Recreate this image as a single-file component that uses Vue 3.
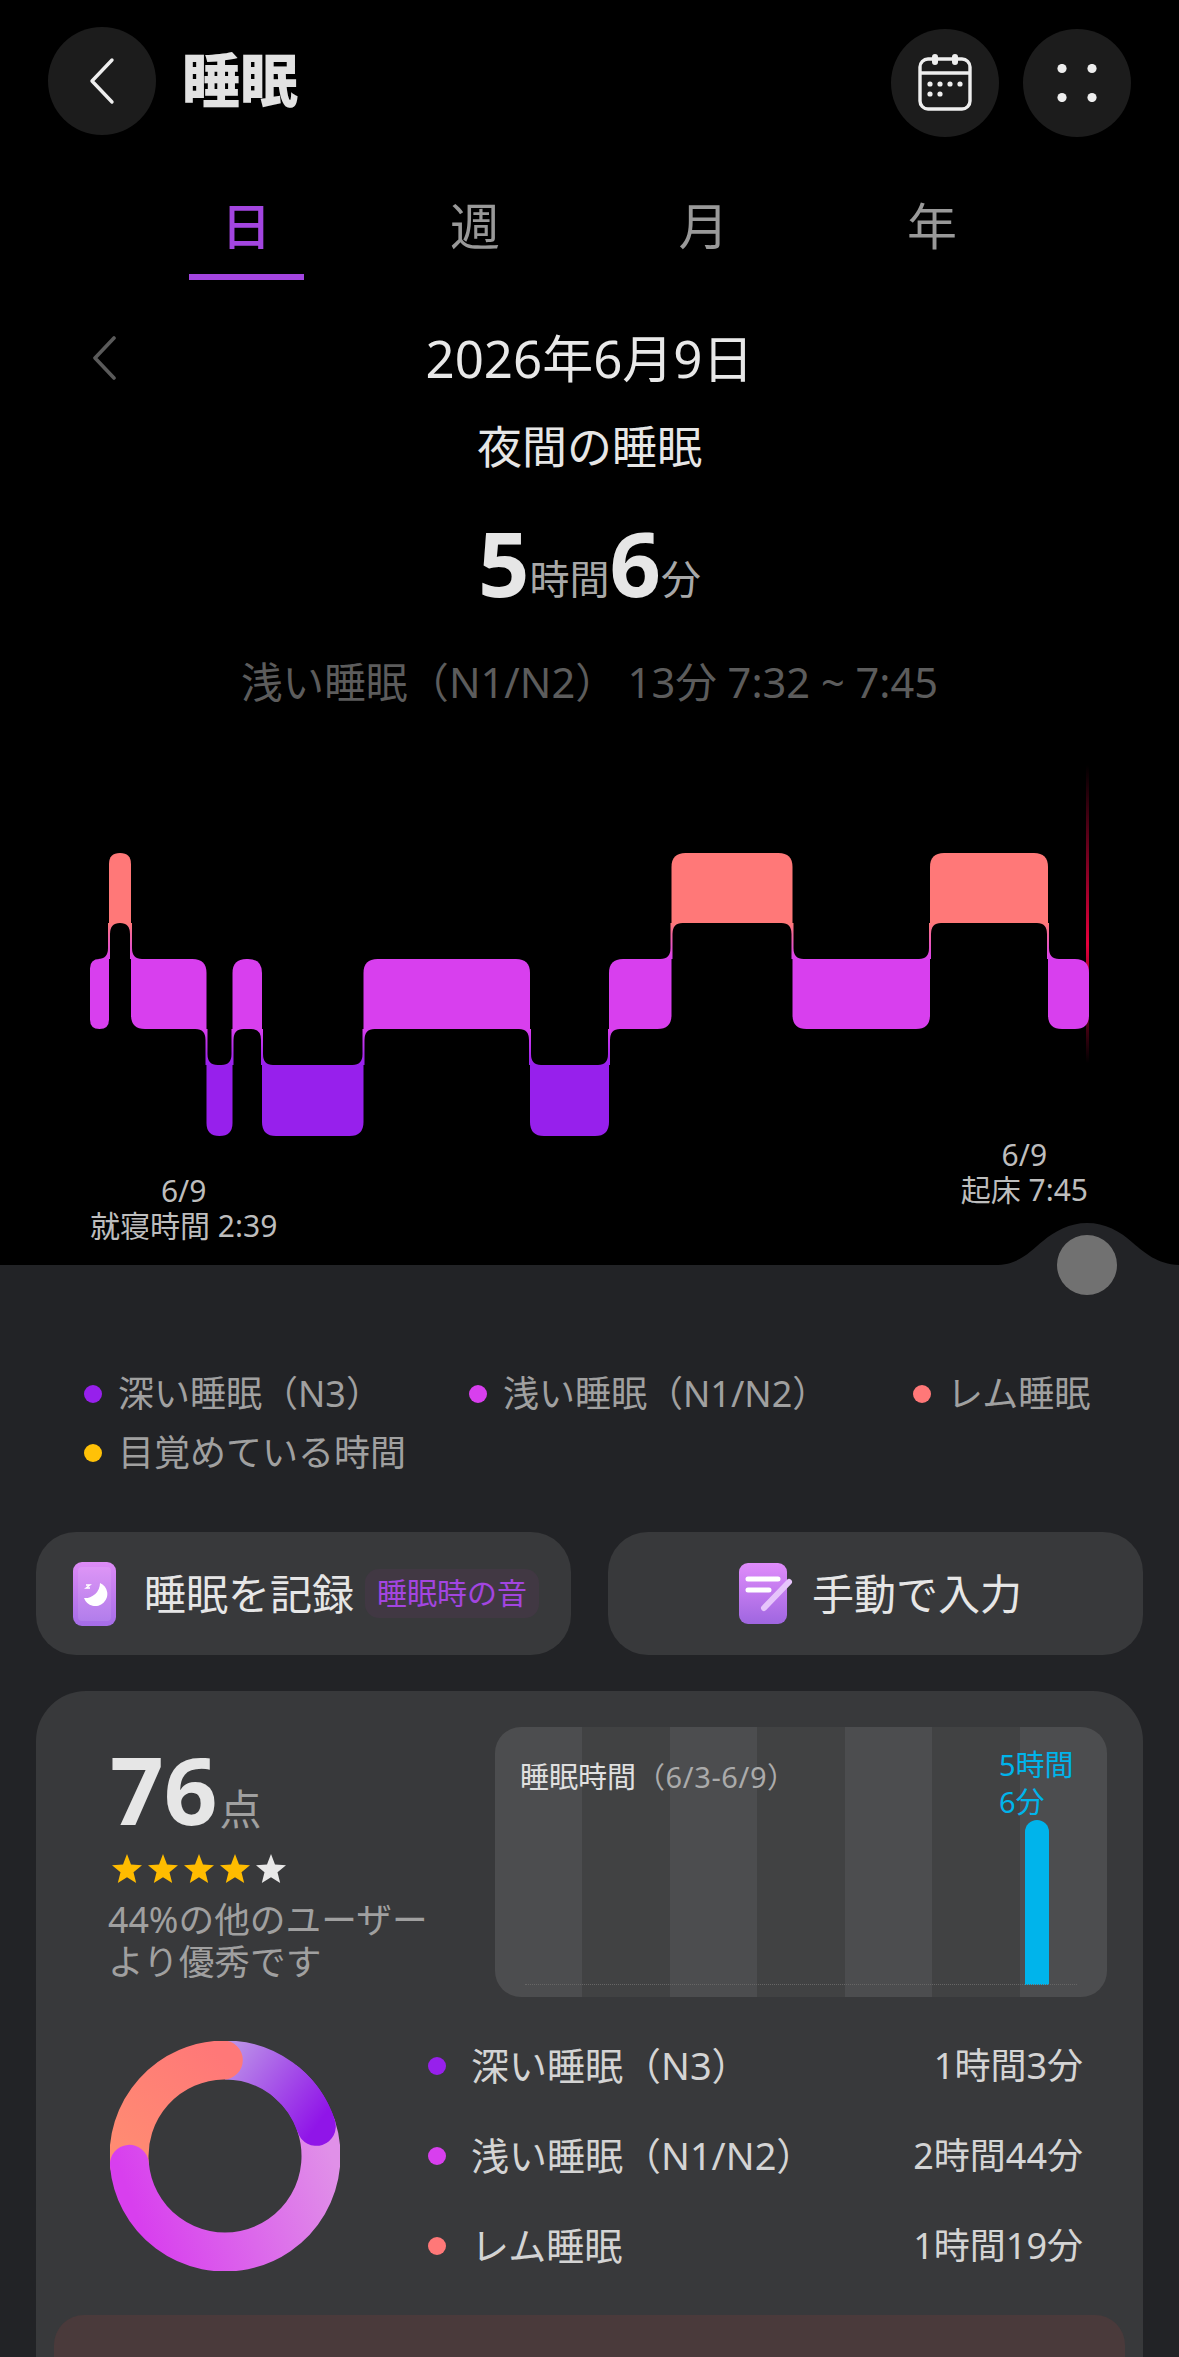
<template>
  <div class="page">
    <header class="top">
      <button class="round">
        <svg width="30" height="48" viewBox="0 0 30 48"><path d="M25 3 5 24l20 21" fill="none" stroke="#eee" stroke-width="3.4" stroke-linecap="round" stroke-linejoin="round" /></svg>
      </button>
      <h1>睡眠</h1>
      <div class="top-right">
        <button class="round">
          <svg width="56" height="58" viewBox="0 0 56 58">
            <rect x="3" y="5" width="50" height="50" rx="8" fill="none" stroke="#eee" stroke-width="3.4" />
            <path d="M3 19h50" stroke="#eee" stroke-width="3.4" />
            <path d="M18 3v5M38 3v5" stroke="#eee" stroke-width="6" stroke-linecap="round" />
            <circle v-for="d in calDots" :key="d[0] + '-' + d[1]" :cx="d[0]" :cy="d[1]" r="2.6" fill="#eee" />
          </svg>
        </button>
        <button class="round">
          <svg width="44" height="38" viewBox="0 0 44 38">
            <circle cx="7" cy="4.500" r="4.600" fill="#eee" />
            <circle cx="37" cy="4.500" r="4.600" fill="#eee" />
            <circle cx="7" cy="33.500" r="4.600" fill="#eee" />
            <circle cx="37" cy="33.500" r="4.600" fill="#eee" />
          </svg>
        </button>
      </div>
    </header>

    <nav class="tabs">
      <div v-for="(t, i) in tabs" :key="t" class="tab" :class="{ on: i === 0 }">
        <span>{{ t }}</span>
        <i></i>
      </div>
    </nav>

    <div class="date-row">
      <svg width="26" height="44" viewBox="0 0 26 44"><path d="M23 2 4 22l19 20" fill="none" stroke="#5a5a5a" stroke-width="3.6" stroke-linecap="round" stroke-linejoin="round" /></svg>
      <div class="date">2026年6月9日</div>
      <span></span>
    </div>
    <div class="kind">夜間の睡眠</div>
    <div class="dur"><b>5</b>時間<b>6</b>分</div>
    <div class="stage">浅い睡眠（N1/N2） 13分 7:32 ~ 7:45</div>

    <svg class="hypno" width="1179" height="377" viewBox="0 760 1179 377">
      <defs>
        <linearGradient id="g-rem" gradientUnits="userSpaceOnUse" x1="0" y1="923" x2="0" y2="959">
          <stop offset="0" stop-color="#ff7878" />
          <stop offset="1" stop-color="#d83fee" />
        </linearGradient>
        <linearGradient id="g-deep" gradientUnits="userSpaceOnUse" x1="0" y1="1029" x2="0" y2="1065">
          <stop offset="0" stop-color="#d83fee" />
          <stop offset="1" stop-color="#9720ec" />
        </linearGradient>
        <linearGradient id="g-now" x1="0" y1="0" x2="0" y2="1">
          <stop offset="0" stop-color="#e6003c" stop-opacity="0" />
          <stop offset="0.6" stop-color="#e6003c" />
          <stop offset="1" stop-color="#e6003c" stop-opacity="0" />
        </linearGradient>
      </defs>
      <rect x="1086" y="765" width="3" height="298" fill="url(#g-now)" />
      <path v-for="(l, i) in links" :key="'l' + i" :d="l.d" :fill="l.fill" />
      <path v-for="(b, i) in blocks" :key="'b' + i" :d="b.d" :fill="b.fill" />
    </svg>

    <div class="marks">
      <div class="mark left">6/9<br />就寝時間 2:39</div>
      <div class="mark">6/9<br />起床 7:45</div>
    </div>

    <section class="panel">
      <div class="knob">
        <svg width="184" height="42" viewBox="0 0 184 42"><path d="M0 42C25 42 35 28 48 18 60 8 75 0 92 0c18 0 33 8 46 20 12 10 24 21 46 22Z" fill="#222326" /></svg>
        <i></i>
      </div>

      <div class="legend">
        <div v-for="l in legend" :key="l.name" class="leg" :style="{ width: l.w }">
          <i :style="{ background: l.color }"></i>{{ l.name }}
        </div>
      </div>

      <div class="actions">
        <div class="act">
          <svg width="44" height="64" viewBox="0 0 44 64">
            <defs>
              <linearGradient id="g-phone" x1="0" y1="0" x2="0" y2="1">
                <stop offset="0" stop-color="#dd8bf6" />
                <stop offset="1" stop-color="#a56de8" />
              </linearGradient>
            </defs>
            <rect width="43" height="64" rx="9" fill="url(#g-phone)" />
            <rect x="5" y="5" width="33" height="54" rx="4" fill="#fff" fill-opacity="0.1" />
            <path d="M27 21a12 12 0 1 1-16 15 15 15 0 0 0 16-15Z" fill="#fff" />
            <path d="M13 23h4l-4 3h4" fill="none" stroke="#fff" stroke-width="1.3" />
          </svg>
          <span class="act-label">睡眠を記録</span>
          <span class="pill">睡眠時の音</span>
        </div>
        <div class="act center">
          <svg width="54" height="62" viewBox="0 0 54 62">
            <defs>
              <linearGradient id="g-note" x1="0" y1="0" x2="0" y2="1">
                <stop offset="0" stop-color="#e08cfb" />
                <stop offset="1" stop-color="#9f66e0" />
              </linearGradient>
            </defs>
            <rect width="48" height="61" rx="9" fill="url(#g-note)" />
            <path d="M9 16h30M9 27h21" stroke="#fff" stroke-width="5" stroke-linecap="round" />
            <path d="M50 19 25 45" stroke="#e6c4fb" stroke-width="6" stroke-linecap="round" />
          </svg>
          <span class="act-label">手動で入力</span>
        </div>
      </div>

      <div class="card">
        <div class="summary">
          <div class="score">
            <div class="points"><b>76</b>点</div>
            <div class="stars">
              <svg v-for="n in 5" :key="n" width="30" height="30" viewBox="0 0 30 30">
                <path d="M15 1l4 10.500 11 .8-8.500 7 2.700 10.700L15 24.200 5.800 30l2.700-10.700L0 12.300l11-.8Z" :fill="n < 5 ? '#ffbc00' : '#e8e8e8'" />
              </svg>
            </div>
            <p>44%の他のユーザー<br />より優秀です</p>
          </div>
          <div class="week">
            <i v-for="n in 7" :key="n" :class="{ odd: n % 2 === 1 }"></i>
            <div class="week-title">睡眠時間<span>（6/3-6/9）</span></div>
            <div class="week-val">5時間<br />6分</div>
            <div class="week-bar"></div>
            <div class="week-base"></div>
          </div>
        </div>

        <div class="breakdown">
          <svg class="donut" width="230" height="230" viewBox="-115 -115 230 230">
            <defs>
              <linearGradient id="d-deep" gradientUnits="userSpaceOnUse" x1="0" y1="-96" x2="91" y2="-29">
                <stop offset="0" stop-color="#bb90e8" />
                <stop offset="1" stop-color="#9015e8" />
              </linearGradient>
              <linearGradient id="d-light" gradientUnits="userSpaceOnUse" x1="96" y1="-30" x2="-96" y2="40">
                <stop offset="0" stop-color="#e090e8" />
                <stop offset="1" stop-color="#d83fee" />
              </linearGradient>
              <linearGradient id="d-rem" gradientUnits="userSpaceOnUse" x1="0" y1="-96" x2="-96" y2="10">
                <stop offset="0" stop-color="#ff7878" />
                <stop offset="1" stop-color="#ff8c72" />
              </linearGradient>
            </defs>
            <path :d="arc(0, 72)" stroke="url(#d-deep)" class="ring" />
            <path :d="arc(265, 359)" stroke="url(#d-rem)" class="ring" stroke-linecap="round" />
            <path :d="arc(72, 265)" stroke="url(#d-light)" class="ring" stroke-linecap="round" />
            <path :d="arc(40, 72)" stroke="url(#d-deep)" class="ring" stroke-linecap="round" />
          </svg>
          <div class="rows">
            <div v-for="r in rows" :key="r.name" class="row">
              <i :style="{ background: r.color }"></i>
              <span>{{ r.name }}</span>
              <em>{{ r.value }}</em>
            </div>
          </div>
        </div>

        <div class="advice"></div>
      </div>
    </section>
  </div>
</template>

<script setup>
const tabs = ['日', '週', '月', '年']

const calDots = [[13, 30], [23, 30], [33, 30], [43, 30], [13, 40], [23, 40]]

const legend = [
  { name: '深い睡眠（N3）', color: '#9720ec', w: '385px' },
  { name: '浅い睡眠（N1/N2）', color: '#d83fee', w: '444px' },
  { name: 'レム睡眠', color: '#ff7878', w: 'auto' },
  { name: '目覚めている時間', color: '#ffc107', w: '100%' },
]

const rows = [
  { name: '深い睡眠（N3）', value: '1時間3分', color: '#9720ec' },
  { name: '浅い睡眠（N1/N2）', value: '2時間44分', color: '#d83fee' },
  { name: 'レム睡眠', value: '1時間19分', color: '#ff7878' },
]

const levels = {
  rem: { top: 853, bottom: 923, fill: '#ff7878', rank: 0 },
  light: { top: 959, bottom: 1029, fill: '#d83fee', rank: 1 },
  deep: { top: 1065, bottom: 1136, fill: '#9720ec', rank: 2 },
}

const segments = [
  ['light', 90, 109],
  ['rem', 109, 131],
  ['light', 131, 206.500],
  ['deep', 206.500, 232.500],
  ['light', 232.500, 262],
  ['deep', 262, 363.500],
  ['light', 363.500, 530],
  ['deep', 530, 609],
  ['light', 609, 671.500],
  ['rem', 671.500, 792.500],
  ['light', 792.500, 930],
  ['rem', 930, 1048],
  ['light', 1048, 1089],
]

const blocks = segments.map(([lv, x1, x2], i) => {
  const { top, bottom, fill, rank } = levels[lv]
  const r = Math.min(14, (x2 - x1) / 2)
  const prev = segments[i - 1] ? levels[segments[i - 1][0]].rank : null
  const next = segments[i + 1] ? levels[segments[i + 1][0]].rank : null
  // the corner that carries a link to the neighbour stays square
  const tl = prev !== null && prev < rank ? 0 : r
  const bl = prev !== null && prev > rank ? 0 : r
  const tr = next !== null && next < rank ? 0 : r
  const br = next !== null && next > rank ? 0 : r
  const d = `M${x1 + tl} ${top}H${x2 - tr}Q${x2} ${top} ${x2} ${top + tr}V${bottom - br}Q${x2} ${bottom} ${x2 - br} ${bottom}H${x1 + bl}Q${x1} ${bottom} ${x1} ${bottom - bl}V${top + tl}Q${x1} ${top} ${x1 + tl} ${top}Z`
  return { d, fill }
})

const links = segments.slice(1).map(([lv, x], i) => {
  const a = levels[segments[i][0]]
  const b = levels[lv]
  const upperLeft = a.rank < b.rank
  const u = upperLeft ? a : b
  const l = upperLeft ? b : a
  const y1 = u.bottom
  const y2 = l.top
  const s = upperLeft ? 1 : -1
  const r = 11
  const d = `M${x - s * r} ${y1}H${x + s}V${y2 - r}Q${x + s} ${y2} ${x + s * r} ${y2}H${x - s}V${y1 + r}Q${x - s} ${y1} ${x - s * r} ${y1}Z`
  return { d, fill: u.rank === 0 ? 'url(#g-rem)' : 'url(#g-deep)' }
})

const arc = (from, to) => {
  const pt = (deg) => {
    const a = (deg * Math.PI) / 180
    return `${(96 * Math.sin(a)).toFixed(2)} ${(-96 * Math.cos(a)).toFixed(2)}`
  }
  const large = to - from > 180 ? 1 : 0
  return `M${pt(from)}A96 96 0 ${large} 1 ${pt(to)}`
}
</script>

<style>
body {
  background: #000;
}
</style>

<style scoped>
.page {
  width: 1179px;
  height: 2357px;
  overflow: hidden;
  background: #000;
  color: #e6e6e6;
  font-family: "Noto Sans", "Noto Sans CJK JP", sans-serif;
}
.top {
  display: flex;
  align-items: flex-start;
  padding: 27px 48px 0;
  height: 135px;
  box-sizing: border-box;
}
.round {
  width: 108px;
  height: 108px;
  border: 0;
  border-radius: 50%;
  background: #1c1c1c;
  display: flex;
  align-items: center;
  justify-content: center;
  padding: 0;
}
h1 {
  margin: 0 0 0 26px;
  font-size: 58px;
  line-height: 106px;
  font-weight: 900;
  color: #e2e2e2;
}
.top-right {
  margin-left: auto;
  margin-top: 2px;
  display: flex;
  gap: 24px;
}
.tabs {
  display: flex;
  padding: 63px 0 0 132px;
}
.tab {
  width: 228.600px;
  display: flex;
  flex-direction: column;
  align-items: center;
  font-size: 50px;
  line-height: 60px;
  color: #999;
}
.tab span {
  margin-top: -2px;
  margin-bottom: 2px;
}
.tab i {
  width: 115px;
  height: 6px;
  margin-top: 16px;
}
.tab.on {
  color: #a345e0;
  font-weight: 500;
}
.tab.on i {
  background: #a345e0;
}
.date-row {
  display: grid;
  grid-template-columns: 1fr auto 1fr;
  align-items: center;
  margin-top: 48px;
  padding-left: 91px;
  padding-right: 91px;
  height: 60px;
}
.date {
  font-size: 51px;
  line-height: 58px;
  color: #e8e8e8;
}
.kind {
  margin-top: 29px;
  text-align: center;
  font-size: 45px;
  line-height: 60px;
  color: #e6e6e6;
}
.dur {
  margin-top: 35px;
  height: 100px;
  line-height: 100px;
  text-align: center;
  font-size: 40px;
  color: #a8a8a8;
}
.dur b {
  font-size: 90px;
  color: #e6e6e6;
  vertical-align: -3px;
}
.stage {
  margin-top: 45px;
  text-align: center;
  font-size: 41.600px;
  line-height: 50px;
  color: #5c5c5c;
}
.hypno {
  display: block;
  margin-top: 53px;
}
.marks {
  display: flex;
  justify-content: space-between;
  align-items: flex-start;
  padding: 0 91px 0 90px;
  height: 128px;
}
.mark {
  font-size: 30px;
  line-height: 35px;
  text-align: center;
  color: #bdbdbd;
}
.mark.left {
  margin-top: 36px;
}
.panel {
  position: relative;
  height: 1092px;
  background: #222326;
  padding: 109px 36px 0;
}
.knob {
  position: absolute;
  right: 0;
  top: -42px;
  width: 184px;
  height: 42px;
}
.knob svg {
  display: block;
}
.knob i {
  position: absolute;
  left: 62px;
  top: 12px;
  width: 60px;
  height: 60px;
  border-radius: 50%;
  background: #717171;
}
.legend {
  display: flex;
  flex-wrap: wrap;
  row-gap: 19px;
  padding-left: 48px;
}
.leg {
  display: flex;
  align-items: center;
  gap: 16px;
  font-size: 36px;
  line-height: 40px;
  color: #a0a0a0;
  white-space: nowrap;
}
.leg i {
  width: 18px;
  height: 18px;
  border-radius: 50%;
}
.actions {
  display: grid;
  grid-template-columns: 1fr 1fr;
  gap: 37px;
  margin-top: 59px;
}
.act {
  min-width: 0;
  height: 123px;
  border-radius: 40px;
  background: #38393b;
  display: flex;
  align-items: center;
  padding-left: 37px;
}
.act.center {
  justify-content: center;
  padding-left: 10px;
}
.act-label {
  margin-left: 27px;
  margin-top: -4px;
  font-size: 42px;
  color: #e6e6e6;
  white-space: nowrap;
}
.act.center .act-label {
  margin-left: 19px;
}
.pill {
  margin-left: 11px;
  padding: 0 12px;
  height: 49px;
  line-height: 47px;
  border-radius: 14px;
  background: #413843;
  color: #a345e0;
  font-size: 30px;
  white-space: nowrap;
}
.card {
  margin-top: 36px;
  height: 700px;
  border-radius: 50px 50px 0 0;
  background: #38393b;
  padding: 36px 18px 0;
}
.summary {
  display: flex;
  padding: 0 18px 0 54px;
}
.score {
  width: 387px;
  padding-top: 14px;
  flex: none;
}
.points {
  height: 100px;
  line-height: 96px;
  font-size: 42px;
  color: #a0a0a0;
}
.points b {
  font-size: 94px;
  line-height: 96px;
  color: #e6e6e6;
  margin-left: 2px;
  margin-right: 2px;
}
.stars {
  display: flex;
  gap: 6px;
  margin-top: 12px;
  padding-left: 4px;
  height: 30px;
}
.score p {
  margin: 15px 0 0;
  font-size: 35.700px;
  line-height: 42px;
  color: #a0a0a0;
  white-space: nowrap;
}
.week {
  position: relative;
  flex: 1;
  height: 270px;
  display: flex;
  border-radius: 26px;
  overflow: hidden;
}
.week > i {
  flex: 1;
  background: #414243;
}
.week > i.odd {
  background: #4c4d4f;
}
.week-title {
  position: absolute;
  left: 25px;
  top: 32px;
  font-size: 29px;
  line-height: 36px;
  color: #e0e0e0;
  white-space: nowrap;
}
.week-title span {
  color: #ababab;
  letter-spacing: 0.6px;
}
.week-val {
  position: absolute;
  left: 504px;
  top: 19px;
  font-size: 29px;
  line-height: 37px;
  color: #00b4eb;
  white-space: nowrap;
}
.week-bar {
  position: absolute;
  left: 530px;
  top: 93px;
  width: 24px;
  height: 165px;
  border-radius: 12px 12px 0 0;
  background: #00b4eb;
}
.week-base {
  position: absolute;
  left: 30px;
  right: 30px;
  top: 257px;
  border-top: 1px dotted #666;
}
.breakdown {
  display: flex;
  margin-top: 44px;
  padding: 0 42px 0 56px;
}
.donut {
  flex: none;
  display: block;
}
.ring {
  fill: none;
  stroke-width: 39;
}
.rows {
  flex: 1;
  height: 230px;
  margin-left: 88px;
  display: flex;
  flex-direction: column;
  gap: 40px;
}
.row {
  display: flex;
  align-items: center;
  height: 50px;
  font-size: 38px;
  color: #d4d4d4;
  white-space: nowrap;
}
.row i {
  width: 18px;
  height: 18px;
  border-radius: 50%;
  margin-right: 25px;
}
.row span,
.row em {
  margin-top: -5px;
}
.row em {
  margin-left: auto;
  font-style: normal;
  font-size: 36px;
}
.advice {
  margin-top: 44px;
  height: 100px;
  border-radius: 30px;
  background: #4a3a3b;
}
</style>
